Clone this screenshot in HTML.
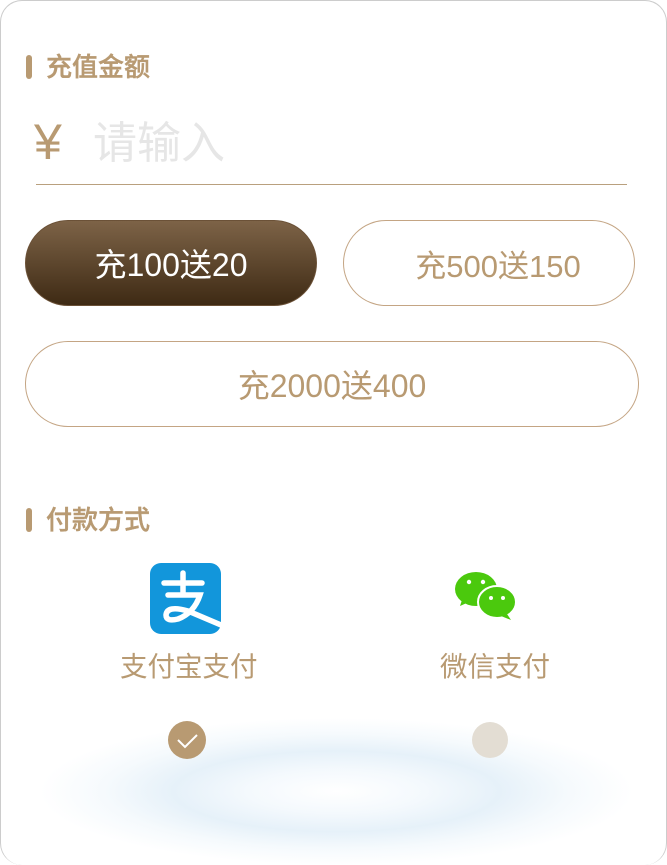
<!DOCTYPE html>
<html><head><meta charset="utf-8"><style>
*{margin:0;padding:0;box-sizing:border-box}
body{width:667px;height:865px;background:#fff;font-family:"Liberation Sans","Noto Sans CJK SC",sans-serif;position:relative;overflow:hidden}
.card{position:absolute;left:0;top:0;width:667px;height:865px;border:1px solid #ccc;border-radius:22px;border-bottom:none;background:#fff}
.t{position:absolute;left:26px;font-size:26px;font-weight:500;color:#b89a72;line-height:30px;-webkit-text-stroke:0.4px #b89a72}
.t:before{content:"";position:absolute;left:0;top:3px;width:6px;height:24px;border-radius:3px;background:#b89a72}
.t span{margin-left:20px}
.btn{position:absolute;height:86px;border:1px solid #c4a584;border-radius:43px;color:#b89a72;font-size:31px;display:flex;align-items:center;justify-content:center}
.abs{position:absolute}
</style></head><body>
<div class="card"></div>
<div class="abs" style="left:40px;top:690px;width:593px;height:175px;background:radial-gradient(ellipse 50% 42% at 50% 58%,#fff 0%,#f4f9fd 30%,#e6f1f9 55%,rgba(236,245,251,0.5) 78%,rgba(255,255,255,0) 100%)"></div>
<div class="t" style="top:52px"><span>充值金额</span></div>
<div class="abs" style="left:34px;top:112px;font-size:50px;color:#b89a72;line-height:60px">¥</div>
<div class="abs" style="left:93px;top:116px;font-size:44px;color:#e6e6e6;line-height:56px">请输入</div>
<div class="abs" style="left:36px;top:184px;width:591px;height:1px;background:#b9a07e"></div>
<div class="btn" style="left:25px;top:220px;width:292px;background:linear-gradient(#7d6347,#3e2a14);color:#fff;border-color:#6b5137;font-size:32px">充100送20</div>
<div class="btn" style="left:343px;top:220px;width:292px;padding-left:18px">充500送150</div>
<div class="btn" style="left:25px;top:341px;width:614px;font-size:32px">充2000送400</div>
<div class="t" style="top:505px"><span>付款方式</span></div>
<svg class="abs" style="left:150px;top:563px" width="71" height="71" viewBox="0 0 71 71"><rect width="71" height="71" rx="11" fill="#1296db"/><path d="M14 20h38M33 10v22M18 32h32q-6 18-22 24q-12 3-12-4q1-10 22-4l33 14" stroke="#fff" stroke-width="5.5" fill="none" stroke-linecap="round"/></svg>
<svg class="abs" style="left:455px;top:570px" width="62" height="50" viewBox="0 0 62 50"><ellipse cx="21" cy="19" rx="21" ry="17" fill="#4bc90d"/><path d="M7 30l-2 6 9-4z" fill="#4bc90d"/><ellipse cx="42" cy="32" rx="19" ry="16" fill="#4bc90d" stroke="#fff" stroke-width="2"/><path d="M52 44l4 6-10-4z" fill="#4bc90d"/><circle cx="14" cy="12" r="2.2" fill="#fff"/><circle cx="28" cy="12" r="2.2" fill="#fff"/><circle cx="36" cy="28" r="2" fill="#fff"/><circle cx="48" cy="28" r="2" fill="#fff"/></svg>
<div class="abs" style="left:120px;top:649px;font-size:27.5px;color:#b89a72;line-height:36px">支付宝支付</div>
<div class="abs" style="left:440px;top:649px;font-size:27.5px;color:#b89a72;line-height:36px">微信支付</div>
<svg class="abs" style="left:168px;top:721px" width="38" height="38" viewBox="0 0 38 38"><circle cx="19" cy="19" r="19" fill="#b89a72"/><path d="M10 19l7 7 12-12" stroke="#fff" stroke-width="2" fill="none"/></svg>
<div class="abs" style="left:472px;top:722px;width:36px;height:36px;border-radius:50%;background:#e3ddd3"></div>
</body></html>
